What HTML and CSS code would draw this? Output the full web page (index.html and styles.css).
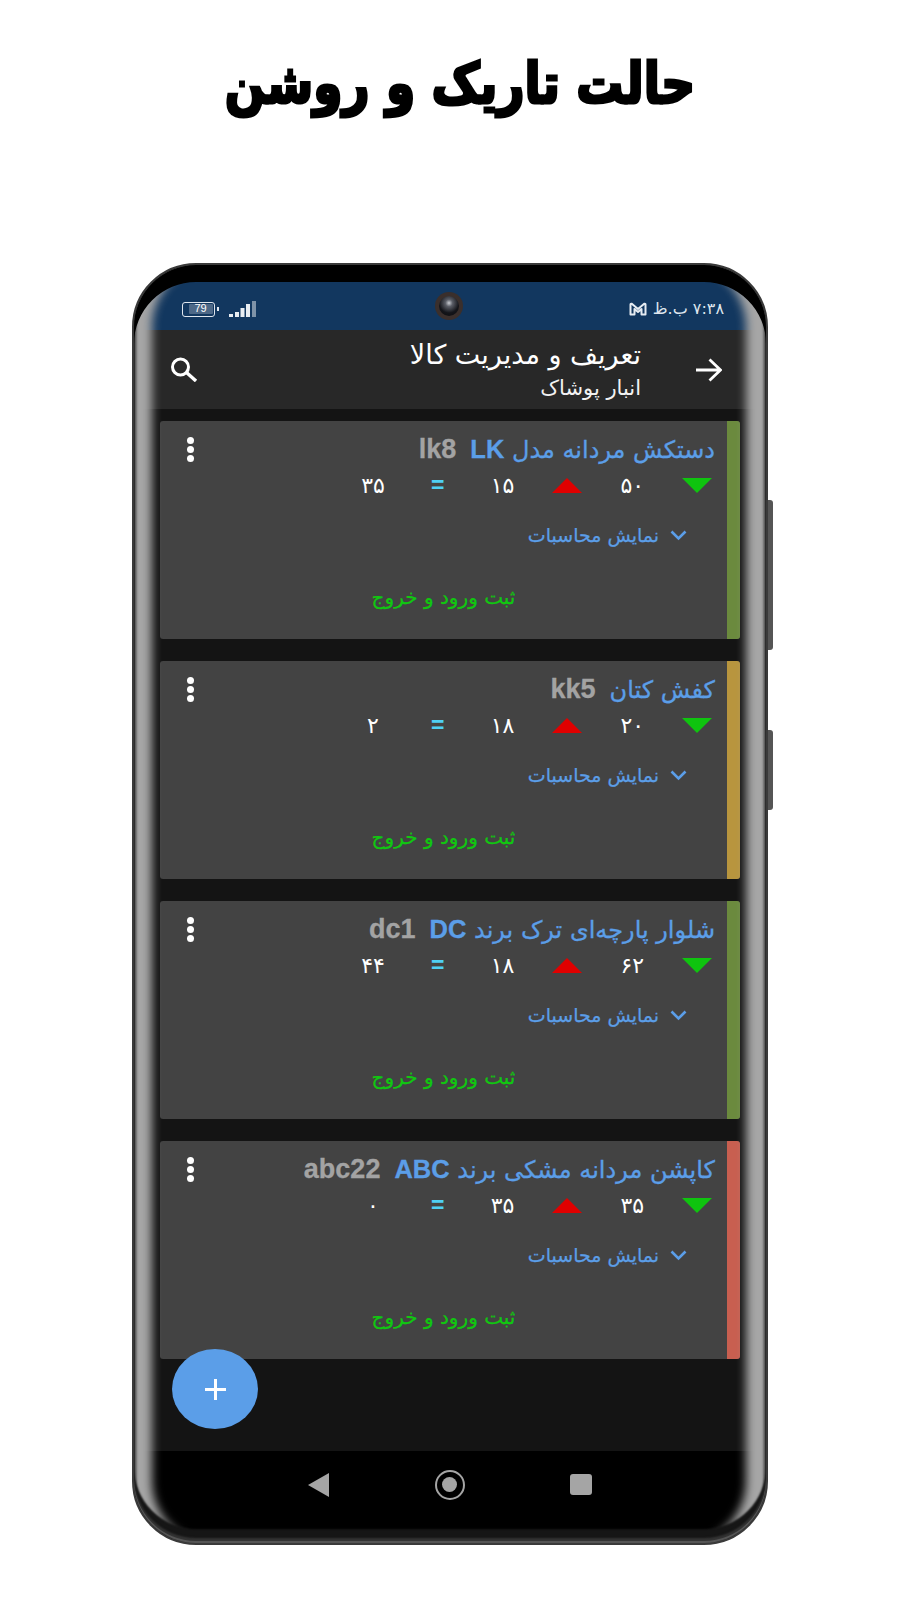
FILE: index.html
```html
<!DOCTYPE html>
<html lang="fa" dir="rtl">
<head>
<meta charset="utf-8">
<title>حالت تاریک و روشن</title>
<link rel="stylesheet" href="styles.css">
</head>
<body>
<h1 class="headline">حالت تاریک و روشن</h1>
<div class="phone">
  <div class="key key-power"></div>
  <div class="key key-volume"></div>
  <div class="screen">
    <div class="status">
      <div class="status-right">
        <span class="clock">۷:۳۸ ب.ظ</span>
        <svg class="gmail" viewBox="0 0 18 14" width="18" height="14"><path d="M1.500 12.500V2.500Q1.500 1.500 2.800 1.800L9 7l6.200-5.200q1.300-.3 1.300.7v10h-4V7L9 10 5.500 7v5.500z" fill="none" stroke="#e6ecf2" stroke-width="2" stroke-linejoin="round"/></svg>
      </div>
      <div class="status-left">
        <svg class="signal" viewBox="0 0 27 16" width="27" height="16"><rect x="0" y="13" width="4" height="3" fill="#e8edf2"/><rect x="6" y="11" width="4" height="5" fill="#e8edf2"/><rect x="11.500" y="7" width="4" height="9" fill="#e8edf2"/><rect x="17" y="3" width="4" height="13" fill="#e8edf2"/><rect x="23" y="0" width="4" height="16" fill="#7f93a8"/></svg>
        <span class="battery-tip"></span>
        <span class="battery"><span class="battery-num">79</span></span>
      </div>
    </div>
    <div class="camera"><span class="camera-lens"></span></div>
    <header class="appbar">
      <svg class="back" viewBox="0 0 26 24" width="26" height="24"><path d="M0 12h24M13.500 1.500L24.500 12 13.500 22.500" fill="none" stroke="#fff" stroke-width="2.800"/></svg>
      <div class="appbar-titles">
        <div class="appbar-title">تعریف و مدیریت کالا</div>
        <div class="appbar-sub">انبار پوشاک</div>
      </div>
      <svg class="search" viewBox="0 0 28 25" width="28" height="25"><circle cx="10.500" cy="10" r="8" fill="none" stroke="#fff" stroke-width="3"/><path d="M16.500 15.500l9.500 8.500" stroke="#fff" stroke-width="3.400"/></svg>
    </header>
    <main class="content">
      <article class="card">
        <div class="strip strip-green"></div>
        <div class="card-main">
          <div class="card-head">
            <div class="card-title"><span class="name">دستکش مردانه مدل <b class="latin">LK</b></span><b class="code">lk8</b></div>
            <div class="kebab"><i></i><i></i><i></i></div>
          </div>
          <div class="stats">
            <div class="cell"><span class="tri tri-in"></span></div>
            <div class="cell">۵۰</div>
            <div class="cell"><span class="tri tri-out"></span></div>
            <div class="cell">۱۵</div>
            <div class="cell eq">=</div>
            <div class="cell">۳۵</div>
          </div>
          <div class="calc"><svg viewBox="0 0 17 11" width="17" height="11"><path d="M1.500 1.500l7 7 7-7" fill="none" stroke="#5b9ee8" stroke-width="2.600"/></svg><span>نمایش محاسبات</span></div>
          <div class="register">ثبت ورود و خروج</div>
        </div>
      </article>
      <article class="card">
        <div class="strip strip-amber"></div>
        <div class="card-main">
          <div class="card-head">
            <div class="card-title"><span class="name">کفش کتان</span><b class="code">kk5</b></div>
            <div class="kebab"><i></i><i></i><i></i></div>
          </div>
          <div class="stats">
            <div class="cell"><span class="tri tri-in"></span></div>
            <div class="cell">۲۰</div>
            <div class="cell"><span class="tri tri-out"></span></div>
            <div class="cell">۱۸</div>
            <div class="cell eq">=</div>
            <div class="cell">۲</div>
          </div>
          <div class="calc"><svg viewBox="0 0 17 11" width="17" height="11"><path d="M1.500 1.500l7 7 7-7" fill="none" stroke="#5b9ee8" stroke-width="2.600"/></svg><span>نمایش محاسبات</span></div>
          <div class="register">ثبت ورود و خروج</div>
        </div>
      </article>
      <article class="card">
        <div class="strip strip-green"></div>
        <div class="card-main">
          <div class="card-head">
            <div class="card-title"><span class="name">شلوار پارچه‌ای ترک برند <b class="latin">DC</b></span><b class="code">dc1</b></div>
            <div class="kebab"><i></i><i></i><i></i></div>
          </div>
          <div class="stats">
            <div class="cell"><span class="tri tri-in"></span></div>
            <div class="cell">۶۲</div>
            <div class="cell"><span class="tri tri-out"></span></div>
            <div class="cell">۱۸</div>
            <div class="cell eq">=</div>
            <div class="cell">۴۴</div>
          </div>
          <div class="calc"><svg viewBox="0 0 17 11" width="17" height="11"><path d="M1.500 1.500l7 7 7-7" fill="none" stroke="#5b9ee8" stroke-width="2.600"/></svg><span>نمایش محاسبات</span></div>
          <div class="register">ثبت ورود و خروج</div>
        </div>
      </article>
      <article class="card">
        <div class="strip strip-red"></div>
        <div class="card-main">
          <div class="card-head">
            <div class="card-title"><span class="name">کاپشن مردانه مشکی برند <b class="latin">ABC</b></span><b class="code">abc22</b></div>
            <div class="kebab"><i></i><i></i><i></i></div>
          </div>
          <div class="stats">
            <div class="cell"><span class="tri tri-in"></span></div>
            <div class="cell">۳۵</div>
            <div class="cell"><span class="tri tri-out"></span></div>
            <div class="cell">۳۵</div>
            <div class="cell eq">=</div>
            <div class="cell">۰</div>
          </div>
          <div class="calc"><svg viewBox="0 0 17 11" width="17" height="11"><path d="M1.500 1.500l7 7 7-7" fill="none" stroke="#5b9ee8" stroke-width="2.600"/></svg><span>نمایش محاسبات</span></div>
          <div class="register">ثبت ورود و خروج</div>
        </div>
      </article>
      <button class="fab" type="button" aria-label="افزودن"><svg viewBox="0 0 21 21" width="21" height="21"><path d="M10.500 0v21M0 10.500h21" stroke="#fff" stroke-width="3"/></svg></button>
    </main>
    <nav class="navbar">
      <span class="nav-recent"></span>
      <span class="nav-home"><span class="nav-home-dot"></span></span>
      <svg viewBox="0 0 21 24" width="21" height="24"><path d="M21 0v24L0 12z" fill="#a5a5a5"/></svg>
    </nav>
  </div>
  <div class="bezel"></div>
</div>
</body>
</html>
```

FILE: styles.css
```css
* { box-sizing: border-box; }
html, body { margin: 0; padding: 0; }
body {
  width: 900px;
  height: 1600px;
  background: #fff;
  overflow: hidden;
  font-family: "DejaVu Sans", sans-serif;
}
.headline {
  margin: 0;
  height: 263px;
  padding: 46px 0 0 20px;
  text-align: center;
  font-family: "DejaVu Sans", sans-serif;
  font-size: 56px;
  line-height: 76px;
  font-weight: 700;
  color: #000;
  -webkit-text-stroke: 3px #000;
  transform: scaleX(0.84);
  transform-origin: 460px 0;
}
.phone {
  position: relative;
  width: 636px;
  height: 1282px;
  margin: 0 auto;
  padding: 17px 0 15px;
  border: 2px solid #3a3a3a;
  border-radius: 64px;
  background: #000;
}
.key {
  position: absolute;
  left: 634px;
  width: 5px;
  background: #555;
  border-radius: 0 3px 3px 0;
}
.key-power { top: 235px; height: 150px; }
.key-volume { top: 465px; height: 80px; }
.screen {
  position: relative;
  height: 100%;
  display: flex;
  flex-direction: column;
  border-radius: 46px;
  overflow: hidden;
}
.bezel {
  position: absolute;
  inset: 0;
  border-radius: 62px;
  pointer-events: none;
  box-shadow:
    inset 0 17px 0 #000,
    inset 0 -2px 0 #555,
    inset 0 -5px 2px #333,
    inset 0 -14px 2px #161616,
    inset 1px 0 1px #333,
    inset -1px 0 1px #333,
    inset 3px 0 2px #6a6a6a,
    inset -3px 0 2px #6a6a6a,
    inset 20px 0 10px -2px #a6a6a6,
    inset -22px 0 10px -2px #a6a6a6;
}
.status {
  flex: 0 0 48px;
  display: flex;
  justify-content: space-between;
  align-items: center;
  padding: 6px 42px 0 48px;
  background: #12375f;
}
.status-right, .status-left { display: flex; align-items: center; }
.status-right { gap: 6px; }
.clock {
  font-size: 16px;
  color: #dfe6ee;
  line-height: 20px;
}
.status-left { gap: 2px; }
.signal { margin-left: 8px; }
.battery {
  width: 33px;
  height: 15px;
  border: 1.500px solid #dfe6ee;
  border-radius: 3px;
  padding: 1.500px;
  display: flex;
}
.battery-num {
  width: 24px;
  background: #4d6887;
  border-radius: 1px;
  text-align: center;
  font-family: "Liberation Sans", sans-serif;
  font-size: 11px;
  line-height: 9px;
  color: #fff;
  direction: ltr;
}
.battery-tip { width: 2px; height: 4px; background: #dfe6ee; }
.camera {
  position: absolute;
  left: 301px;
  top: 10px;
  width: 28px;
  height: 28px;
  border-radius: 50%;
  background: #3a2f2c;
  display: flex;
  align-items: center;
  justify-content: center;
}
.camera-lens {
  width: 20px;
  height: 20px;
  border-radius: 50%;
  background: radial-gradient(circle at 50% 35%, #c9ccd2 0, #5a5d66 22%, #14151a 60%, #0b0b0e 100%);
}
.appbar {
  flex: 0 0 79px;
  display: flex;
  align-items: center;
  background: #282828;
  padding: 0 44px 0 36px;
  color: #fff;
}
.appbar-titles { flex: 1; margin-right: 55px; }
.appbar-title { font-size: 27px; line-height: 35px; }
.appbar-sub { font-size: 21px; line-height: 29px; margin-top: 2px; color: #f2f2f2; }
.content {
  position: relative;
  flex: 0 0 1042px;
  display: flex;
  flex-direction: column;
  gap: 22px;
  padding: 12px 26px 0;
  background: #141414;
}
.card {
  height: 218px;
  flex: none;
  display: flex;
  background: #434343;
  border-radius: 3px;
  overflow: hidden;
}
.strip { flex: 0 0 13px; }
.strip-green { background: #6b8a3e; }
.strip-amber { background: #b8953e; }
.strip-red { background: #c85f50; }
.card-main { flex: 1; min-width: 0; }
.card-head {
  display: flex;
  justify-content: space-between;
  align-items: center;
  height: 43px;
  margin-top: 7px;
  padding: 0 12px 0 27px;
}
.card-title {
  display: flex;
  gap: 14px;
  align-items: center;
  white-space: nowrap;
}
.name { font-size: 24px; color: #5b9ee8; -webkit-text-stroke: 0.3px #5b9ee8; }
.latin {
  font-family: "Liberation Sans", sans-serif;
  font-weight: 700;
  font-size: 25.500px;
}
.code {
  font-family: "Liberation Sans", sans-serif;
  font-weight: 700;
  font-size: 27px;
  color: #a3a3a3;
  -webkit-text-stroke: 0.3px #a3a3a3;
}
.kebab { display: flex; flex-direction: column; gap: 2px; margin-top: -1px; }
.kebab i {
  display: block;
  width: 7px;
  height: 7px;
  border-radius: 50%;
  background: #fff;
}
.stats {
  display: flex;
  gap: 4.800px;
  height: 28px;
  color: #fff;
  font-size: 22px;
}
.cell {
  width: 60px;
  height: 28px;
  display: flex;
  align-items: center;
  justify-content: center;
}
.eq {
  color: #4fd0f5;
  font-family: "Liberation Sans", sans-serif;
  font-weight: 700;
  font-size: 23px;
}
.tri { width: 0; height: 0; border-left: 15px solid transparent; border-right: 15px solid transparent; }
.tri-in { border-top: 15px solid #0fc40f; }
.tri-out { border-bottom: 15px solid #e00000; }
.calc {
  display: flex;
  align-items: center;
  gap: 11px;
  height: 36px;
  margin-top: 18px;
  padding-right: 40px;
  font-size: 19px;
  color: #5b9ee8;
  -webkit-text-stroke: 0.25px #5b9ee8;
}
.register {
  height: 36px;
  line-height: 36px;
  margin-top: 26px;
  text-align: center;
  font-size: 20px;
  color: #10c810;
  -webkit-text-stroke: 0.25px #10c810;
}
.fab {
  position: absolute;
  left: 38px;
  bottom: 22px;
  width: 86px;
  height: 80px;
  padding: 0;
  border: 0;
  border-radius: 50%;
  background: #5b9ee8;
  display: flex;
  align-items: center;
  justify-content: center;
}
.navbar {
  flex: 0 0 79px;
  background: #000;
  display: flex;
  align-items: center;
  justify-content: space-between;
  padding: 0 174px 12px 174px;
}
.nav-recent { width: 22px; height: 21px; border-radius: 3px; background: #a5a5a5; }
.nav-home {
  width: 30px;
  height: 30px;
  border: 2.500px solid #a5a5a5;
  border-radius: 50%;
  display: flex;
  align-items: center;
  justify-content: center;
}
.nav-home-dot { width: 15px; height: 15px; border-radius: 50%; background: #a5a5a5; }
```
